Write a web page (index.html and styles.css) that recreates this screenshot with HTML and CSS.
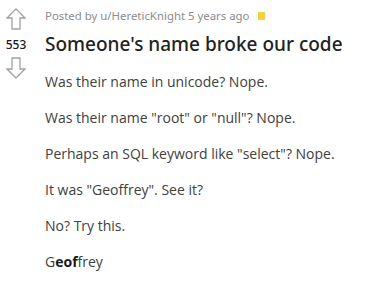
FILE: index.html
```html
<!DOCTYPE html>
<html lang="en">
<head>
    <meta charset="UTF-8">
    <title>Someone's name broke our code</title>
    <link rel="stylesheet" href="styles.css">
</head>
<body>
    <div class="post">
        <!-- Vote column -->
        <div class="votes">
            <svg class="arrow" viewBox="0 0 20 22">
                <path d="M10 1 L19 10 L14 10 L14 21 L6 21 L6 10 L1 10 Z" />
            </svg>
            <div class="score">553</div>
            <svg class="arrow" viewBox="0 0 20 22">
                <path d="M10 21 L19 12 L14 12 L14 1 L6 1 L6 12 L1 12 Z" />
            </svg>
        </div>

        <!-- Post body -->
        <div class="content">
            <div class="meta">
                Posted by u/HereticKnight 5 years ago
                <span class="award"></span>
            </div>
            <h1 class="title">Someone's name broke our code</h1>
            <div class="text">
                <p>Was their name in unicode? Nope.</p>
                <p>Was their name "root" or "null"? Nope.</p>
                <p>Perhaps an SQL keyword like "select"? Nope.</p>
                <p>It was "Geoffrey". See it?</p>
                <p>No? Try this.</p>
                <p>G<b>eof</b>frey</p>
            </div>
        </div>
    </div>
</body>
</html>
```

FILE: styles.css
```css
body {
    margin: 0;
    background: #fff;
}

.post {
    display: flex;
    padding: 8px 0 0 6px;
}

.votes {
    width: 20px;
    display: flex;
    flex-direction: column;
    align-items: center;
}

.arrow {
    width: 20px;
    height: 22px;
}

.arrow path {
    fill: none;
    stroke: #a0a3a5;
    stroke-width: 1.3px;
    stroke-linejoin: miter;
}

.score {
    font-family: "Noto Sans", sans-serif;
    font-size: 12px;
    font-weight: 500;
    color: #1a1a1b;
    line-height: 16px;
    margin: 7px 0 4px;
}

.content {
    margin-left: 19px;
}

.meta {
    font-family: "Noto Sans", sans-serif;
    font-size: 11.4px;
    color: #8a8c8e;
    line-height: 16px;
    display: flex;
    align-items: center;
    gap: 8px;
}

.award {
    display: inline-block;
    width: 7px;
    height: 8px;
    background: #f4d23f;
}

.title {
    font-family: "Noto Sans", sans-serif;
    font-size: 19px;
    font-weight: 500;
    color: #222;
    line-height: 24px;
    margin: 8px 0 0;
}

.text {
    font-family: "Open Sans", sans-serif;
    font-size: 14px;
    color: #404040;
    line-height: 21px;
}

.text p {
    margin: 15px 0 0;
}

.text b {
    font-weight: 700;
    color: #1a1a1b;
}
```
